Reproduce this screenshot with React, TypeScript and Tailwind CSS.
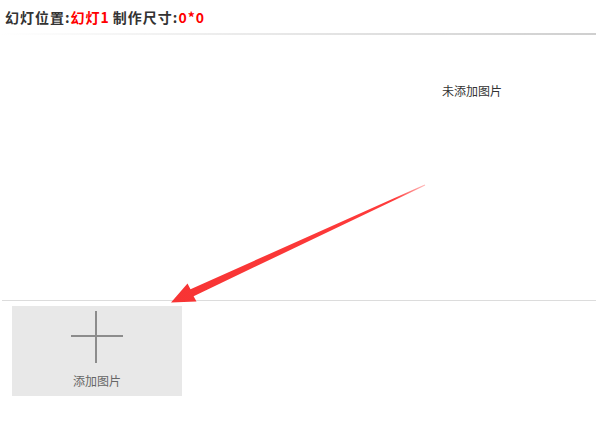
import React from 'react';

const FONT = { fontFamily: '"Noto Sans CJK SC", "Noto Sans", sans-serif' };

// 红色指示箭头（从右上方的提示指向添加按钮）
const PointerArrow: React.FC = () => (
  <svg className="absolute left-0 top-0 pointer-events-none" width="596" height="436" viewBox="0 0 596 436">
    <defs>
      <linearGradient id="arrowFade" x1="425" y1="185" x2="172" y2="302" gradientUnits="userSpaceOnUse">
        <stop offset="0" stopColor="#ff3b3b" stopOpacity="0.35" />
        <stop offset="0.12" stopColor="#ff3b3b" stopOpacity="1" />
        <stop offset="1" stopColor="#f73434" />
      </linearGradient>
    </defs>
    <polygon
      points="424.8,184.5 190.5,289.2 187.5,283.4 171,302.5 196.5,301.4 193.6,296.2 425.2,185.5"
      fill="url(#arrowFade)"
    />
  </svg>
);

const App: React.FC = () => {
  return (
    <div className="relative w-[596px] h-[436px] bg-white overflow-hidden" style={FONT}>
      {/* 标题栏 */}
      <div className="h-[33px] flex items-center pl-[5px] text-[14px] font-bold text-[#333] leading-none tracking-[1px]">
        <span>幻灯位置:</span>
        <span className="text-[#ff0000]">幻灯1</span>
        <span className="ml-[3px]">制作尺寸:</span>
        <span className="text-[#ff0000]">0*0</span>
      </div>
      <div className="h-[2px] bg-gradient-to-r from-white via-[#e6e6e6] to-[#cfcfcf]" />

      {/* 预览区 */}
      <div className="h-[265px] pt-[42px] pl-[442px]">
        <span className="text-[12px] text-[#333]">未添加图片</span>
      </div>

      <div className="ml-[2px] h-px bg-[#dcdcdc]" />

      {/* 添加图片按钮 */}
      <div className="mt-[5px] ml-[12px] w-[170px] h-[90px] bg-[#e8e8e8] flex flex-col items-center">
        <svg width="54" height="54" viewBox="0 0 54 54" className="mt-[4px]">
          <line x1="1" y1="26" x2="53" y2="26" stroke="#8c8c8c" strokeWidth="2" />
          <line x1="26" y1="1" x2="26" y2="53" stroke="#8c8c8c" strokeWidth="2" />
        </svg>
        <span className="mt-[11px] text-[12px] text-[#666] leading-none">添加图片</span>
      </div>

      <PointerArrow />
    </div>
  );
};

export default App;
